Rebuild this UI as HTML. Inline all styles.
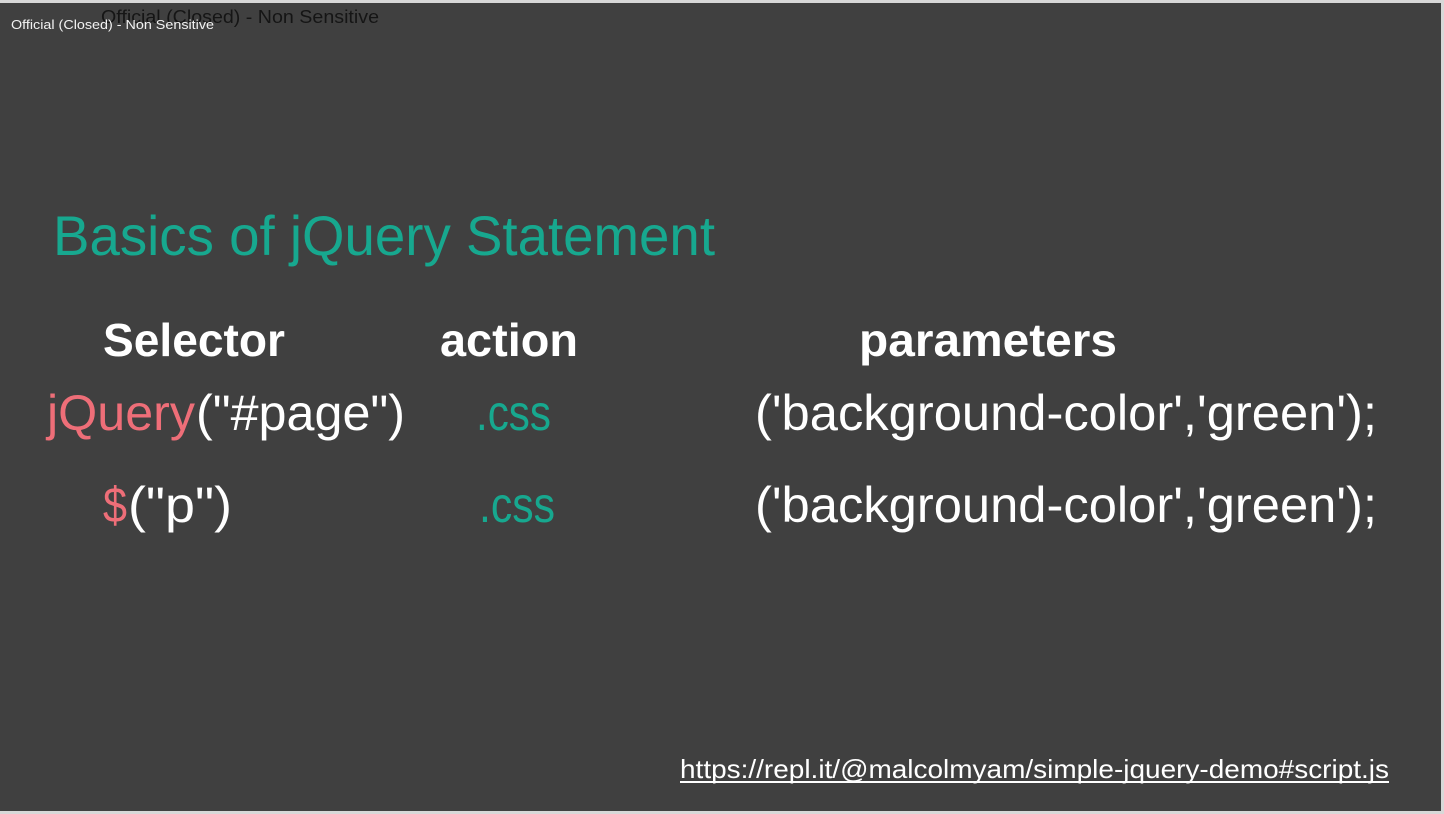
<!DOCTYPE html>
<html><head><meta charset="utf-8"><style>
html,body{margin:0;padding:0;background:#d9d9d9;}
svg{display:block}
</style></head><body>
<svg width="1444" height="814" xmlns="http://www.w3.org/2000/svg" font-family="Liberation Sans, sans-serif">
<rect x="0" y="0" width="1444" height="814" fill="#d8d8d8"/>
<rect x="0" y="3" width="1441" height="808" fill="#404040"/>
<text x="101" y="23" font-size="18" fill="#151515" textLength="278" lengthAdjust="spacingAndGlyphs">Official (Closed) - Non Sensitive</text>
<text x="11" y="29" font-size="13" fill="#f2f2f2" textLength="203" lengthAdjust="spacingAndGlyphs">Official (Closed) - Non Sensitive</text>
<text x="53" y="255" font-size="56" fill="#17a88f" textLength="662" lengthAdjust="spacingAndGlyphs">Basics of jQuery Statement</text>
<g font-size="46" font-weight="bold" fill="#ffffff">
<text x="103" y="356" textLength="182" lengthAdjust="spacingAndGlyphs">Selector</text>
<text x="440" y="356" textLength="138" lengthAdjust="spacingAndGlyphs">action</text>
<text x="859" y="356" textLength="258" lengthAdjust="spacingAndGlyphs">parameters</text>
</g>
<g font-size="50">
<text x="47" y="430" fill="#ee6e78" textLength="148" lengthAdjust="spacingAndGlyphs">jQuery</text>
<text x="196" y="430" fill="#ffffff" textLength="209" lengthAdjust="spacingAndGlyphs">("#page")</text>
<text x="476" y="430" fill="#17a88f" textLength="75" lengthAdjust="spacingAndGlyphs">.css</text>
<text x="755" y="430" fill="#ffffff" textLength="622" lengthAdjust="spacingAndGlyphs">('background-color','green');</text>
<text x="103" y="522" fill="#ee6e78" textLength="24" lengthAdjust="spacingAndGlyphs">$</text>
<text x="128" y="522" fill="#ffffff" textLength="104" lengthAdjust="spacingAndGlyphs">("p")</text>
<text x="479" y="522" fill="#17a88f" textLength="76" lengthAdjust="spacingAndGlyphs">.css</text>
<text x="755" y="522" fill="#ffffff" textLength="622" lengthAdjust="spacingAndGlyphs">('background-color','green');</text>
</g>
<text x="680" y="778" font-size="26" fill="#ffffff" textLength="709" lengthAdjust="spacingAndGlyphs">https://repl.it/@malcolmyam/simple-jquery-demo#script.js</text>
<rect x="680" y="781" width="709" height="2" fill="#ffffff"/>
</svg>
</body></html>
